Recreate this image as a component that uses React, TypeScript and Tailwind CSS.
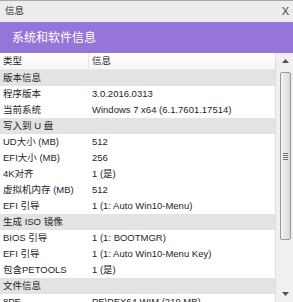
const rows: { k: string; v?: string; group?: boolean }[] = [
  { k: "版本信息", group: true },
  { k: "程序版本", v: "3.0.2016.0313" },
  { k: "当前系统", v: "Windows 7 x64 (6.1.7601.17514)" },
  { k: "写入到 U 盘", group: true },
  { k: "UD大小 (MB)", v: "512" },
  { k: "EFI大小 (MB)", v: "256" },
  { k: "4K对齐", v: "1 (是)" },
  { k: "虚拟机内存 (MB)", v: "512" },
  { k: "EFI 引导", v: "1 (1: Auto Win10-Menu)" },
  { k: "生成 ISO 镜像", group: true },
  { k: "BIOS 引导", v: "1 (1: BOOTMGR)" },
  { k: "EFI 引导", v: "1 (1: Auto Win10-Menu Key)" },
  { k: "包含PETOOLS", v: "1 (是)" },
  { k: "文件信息", group: true },
  { k: "8PE", v: "PE\\PEX64.WIM (219 MB)" },
];

const font = { fontFamily: '"Liberation Sans", "Noto Sans CJK SC", sans-serif' };

export default function App() {
  return (
    <div className="w-[293px] h-[302px] overflow-hidden bg-white text-[#1e1e1e]" style={font}>
      <div className="h-[22px] border-t border-[#a9a9a9] bg-[#ededed] flex items-center justify-between pl-[5px] pr-[4px] text-[9.5px]">
        <span>信息</span>
        <span className="text-[11px] text-[#444]">X</span>
      </div>
      <div className="h-[31px] bg-[#9575d9] flex items-center pl-[12px] text-white text-[12px]">
        系统和软件信息
      </div>
      <div className="flex h-[249px]">
        <div className="w-[276px] text-[9.5px] border-r border-[#dcdcdc]">
          <div className="h-[17px] grid grid-cols-[89px_1fr] items-center bg-gradient-to-b from-white to-[#f6f6f6] border-b border-[#e6e6e6]">
            <span className="pl-[3px] border-r border-[#e4e4e4]">类型</span>
            <span className="pl-[3px]">信息</span>
          </div>
          {rows.map((r, i) =>
            r.group ? (
              <div key={i} className="h-[16px] flex items-center pl-[3px] bg-[#e3e3e3]">
                {r.k}
              </div>
            ) : (
              <div key={i} className="h-[16px] grid grid-cols-[92px_1fr] items-center">
                <span className="pl-[3px] whitespace-nowrap">{r.k}</span>
                <span className="whitespace-nowrap">{r.v}</span>
              </div>
            )
          )}
        </div>
        <div className="w-[17px] bg-[#f0f0f0] flex flex-col items-center pl-[2px]">
          <div className="h-[16px] flex items-center justify-center">
            <svg width="7" height="4" viewBox="0 0 7 4"><path d="M0 4 L3.5 0 L7 4 Z" fill="#555" /></svg>
          </div>
          <div className="mt-[3px] h-[168px] w-[11px] rounded-[2px] border border-[#9a9a9a] bg-gradient-to-r from-[#f2f2f2] to-[#d9d9d9] flex items-center justify-center">
            <div className="flex flex-col gap-[1px]">
              <div className="w-[5px] h-[1px] bg-[#777]" />
              <div className="w-[5px] h-[1px] bg-[#777]" />
              <div className="w-[5px] h-[1px] bg-[#777]" />
              <div className="w-[5px] h-[1px] bg-[#777]" />
            </div>
          </div>
          <div className="flex-1" />
          <div className="h-[16px] flex items-center justify-center">
            <svg width="7" height="4" viewBox="0 0 7 4"><path d="M0 0 L3.5 4 L7 0 Z" fill="#555" /></svg>
          </div>
        </div>
      </div>
    </div>
  );
}
